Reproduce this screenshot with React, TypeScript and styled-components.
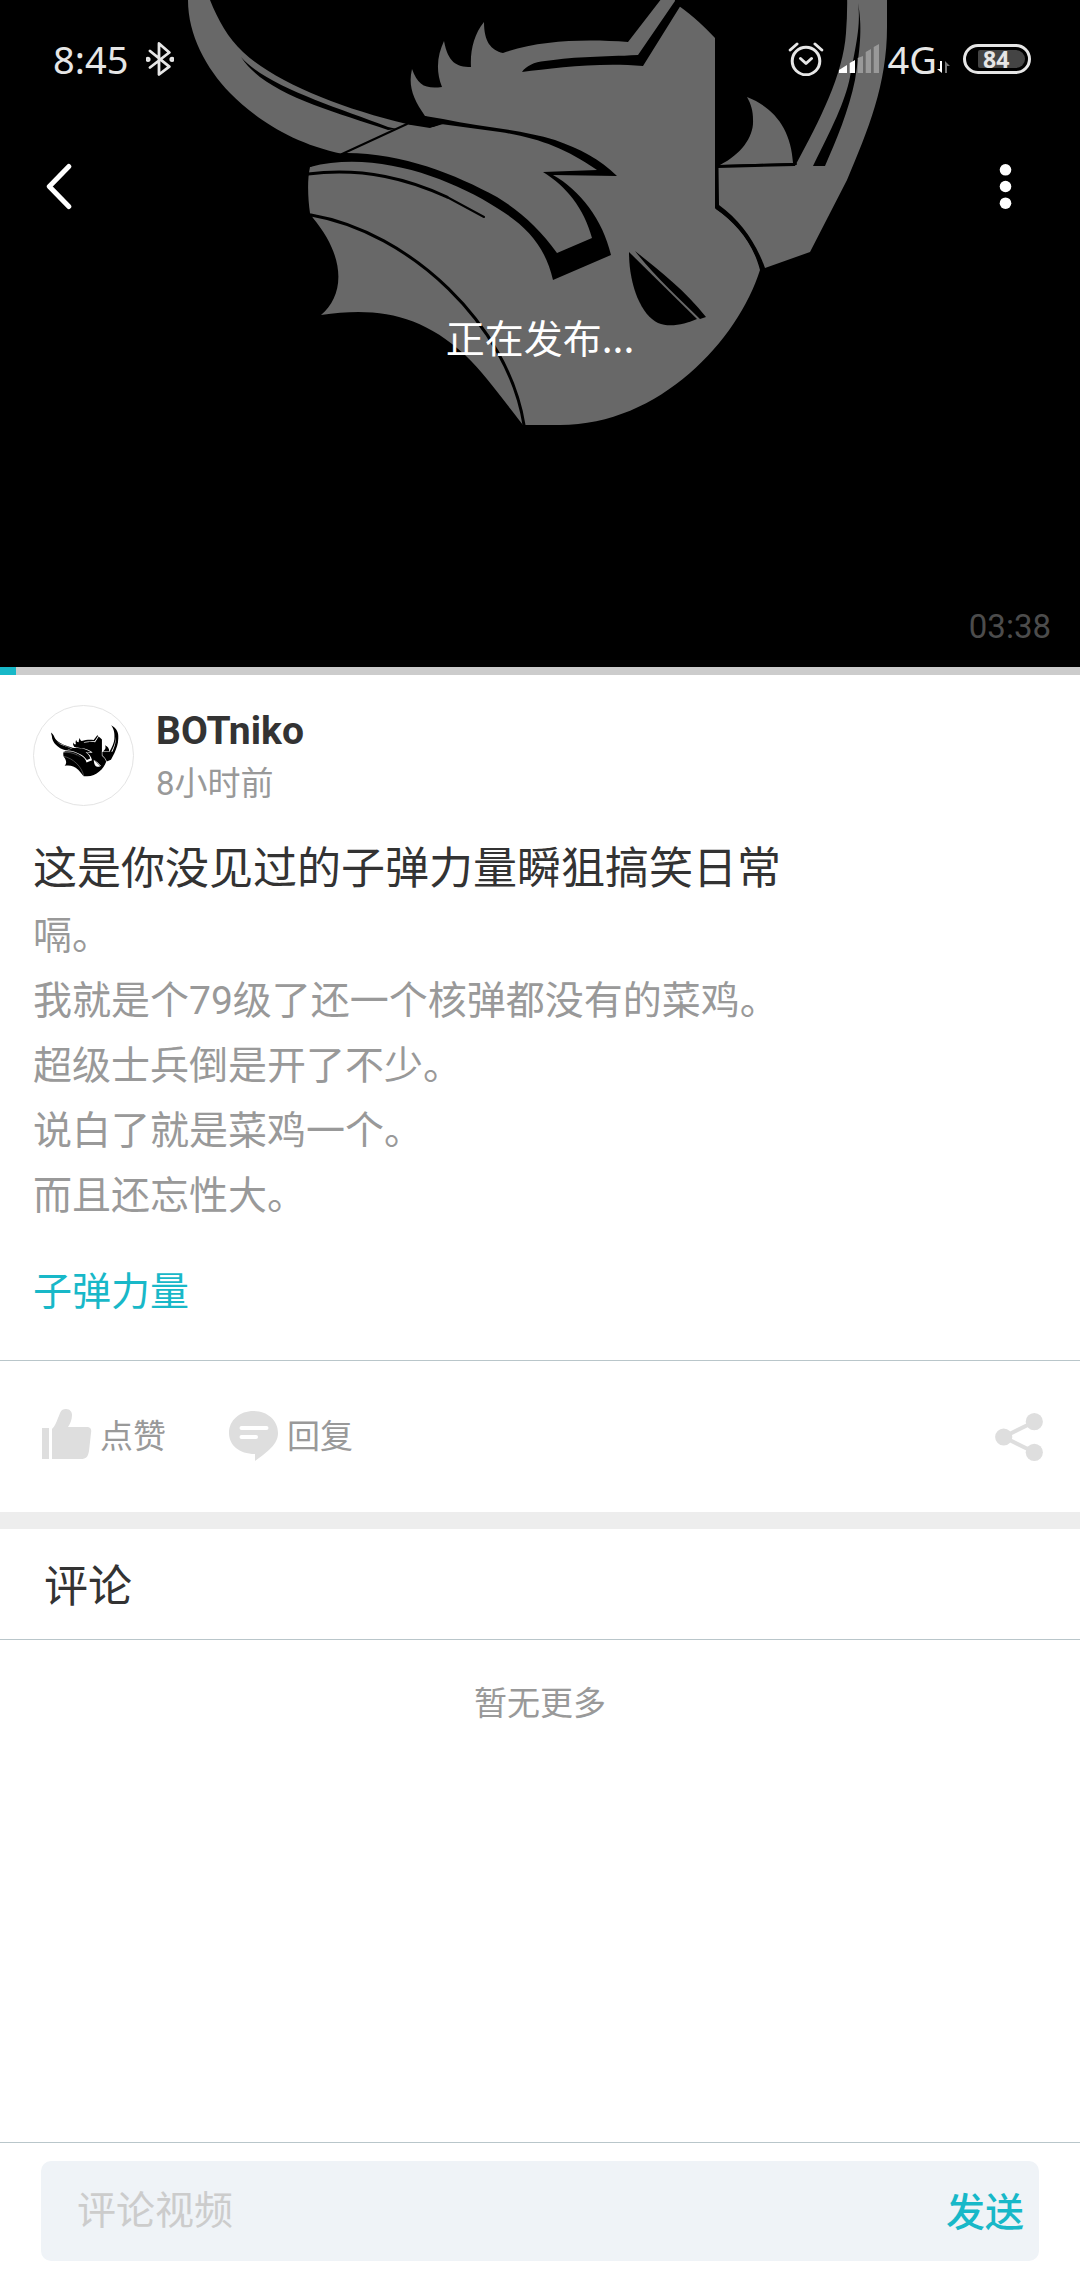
import { useState } from "react";
import styled, { createGlobalStyle } from "styled-components";

const GlobalStyle = createGlobalStyle`
  * {
    box-sizing: border-box;
  }

  body {
    margin: 0;
    background: #fff;
    font-family: Roboto, "Noto Sans CJK SC", sans-serif;
    color: #333;
  }

  h1, h2, p {
    margin: 0;
    font-weight: 400;
  }

  button, input {
    border: none;
    padding: 0;
    background: none;
    font-family: inherit;
  }
`;

const Page = styled.div`
  display: flex;
  flex-direction: column;
  min-height: 100vh;
`;

const Video = styled.section`
  position: relative;
  display: flex;
  flex-direction: column;
  min-height: 667px;
  background: #000;
  color: #fff;
  overflow: hidden;
`;

const Poster = styled.svg`
  position: absolute;
  inset: 0;
  width: 100%;
  height: 100%;
`;

const StatusBar = styled.div`
  position: relative;
  display: flex;
  justify-content: space-between;
  align-items: center;
  height: 118px;
  padding: 0 49px 0 53px;
  font-family: "Noto Sans", sans-serif;
  font-size: 38px;
  color: #e6e6e6;
`;

const StatusGroup = styled.div<{ $gap: number }>`
  display: flex;
  align-items: center;
  gap: ${({ $gap }) => $gap}px;
`;

const Network = styled.div`
  display: flex;
  align-items: flex-end;
  line-height: 32px;
`;

const Battery = styled.div`
  display: flex;
  align-items: center;
  width: 68px;
  height: 30px;
  margin-left: 4px;
  padding: 0 3px 0 12px;
  border: 3px solid #e6e6e6;
  border-radius: 15px;
`;

const BatteryLevel = styled.span`
  flex: 1;
  height: 18px;
  padding-left: 5px;
  border-radius: 2px 9px 9px 2px;
  background: #444;
  font-size: 23px;
  font-weight: 700;
  line-height: 18px;
`;

const Toolbar = styled.div`
  position: relative;
  display: flex;
  justify-content: space-between;
  align-items: center;
  height: 136px;
  padding: 0 39px;
`;

const IconButton = styled.button`
  display: flex;
  justify-content: center;
  align-items: center;
  height: 72px;
  cursor: pointer;
`;

const Publishing = styled.p`
  position: relative;
  padding-top: 57px;
  font-family: "Noto Sans CJK SC", sans-serif;
  font-size: 39px;
  line-height: 50px;
  text-align: center;
`;

const Duration = styled.time`
  position: relative;
  margin-top: auto;
  padding: 0 29px 20px;
  font-size: 33px;
  line-height: 40px;
  text-align: right;
  color: #4c4c4c;
`;

const Progress = styled.div`
  height: 8px;
  background: #ccc;
`;

const ProgressValue = styled.div`
  height: 100%;
  background: #18b8c8;
`;

const Info = styled.section`
  padding: 30px 33px 38px;
  border-bottom: 1px solid #b9c6ca;
`;

const Author = styled.div`
  display: flex;
  gap: 22px;
`;

const Avatar = styled.svg`
  width: 101px;
  height: 101px;
  border: 1px solid #e4e4e4;
  border-radius: 50%;
`;

const AuthorName = styled.p`
  padding-top: 1px;
  font-size: 39px;
  font-weight: 700;
  line-height: 50px;
`;

const PostedAt = styled.p`
  font-size: 33px;
  line-height: 56px;
  color: #999;
`;

const Title = styled.h1`
  margin-top: 27px;
  font-size: 44px;
  line-height: 60px;
`;

const Description = styled.p`
  margin-top: 5px;
  font-size: 39px;
  line-height: 65px;
  color: #999;
  white-space: pre-line;
`;

const Tag = styled.a`
  display: block;
  width: fit-content;
  margin-top: 33px;
  font-size: 39px;
  line-height: 60px;
  color: #18b8c8;
  text-decoration: none;
`;

const Actions = styled.div`
  display: flex;
  align-items: center;
  gap: 62px;
  height: 151px;
  padding: 0 36px 0 41px;
`;

const ActionButton = styled.button<{ $end?: boolean }>`
  display: flex;
  align-items: center;
  gap: 8px;
  margin-left: ${({ $end }) => ($end ? "auto" : "0")};
  font-size: 33px;
  line-height: 50px;
  color: #999;
  cursor: pointer;
`;

const Comments = styled.section`
  flex: 1;
  border-top: 17px solid #ededed;
`;

const CommentsTitle = styled.h2`
  padding: 28px 44px 22px;
  border-bottom: 1px solid #b9c6ca;
  font-size: 44px;
  line-height: 60px;
`;

const Empty = styled.p`
  padding-top: 39px;
  font-size: 33px;
  line-height: 50px;
  text-align: center;
  color: #999;
`;

const CommentForm = styled.form`
  padding: 18px 41px 19px;
  border-top: 1px solid #b9c6ca;
`;

const CommentBox = styled.div`
  display: flex;
  height: 100px;
  padding: 0 15px 0 36px;
  border-radius: 10px;
  background: #eff3f7;
`;

const CommentInput = styled.input`
  flex: 1;
  min-width: 0;
  outline: none;
  font-size: 39px;
  color: #333;

  &::placeholder {
    color: #ccc;
    opacity: 1;
  }
`;

const SendButton = styled.button`
  padding-bottom: 5px;
  font-size: 39px;
  font-weight: 500;
  color: #18b8c8;
  cursor: pointer;
`;

const Bull = ({ fill, line }: { fill: string; line: string }) => (
  <>
    <g fill={fill}>
      {/* left horn */}
      <path d="M179-36C190-28 203-12 210 0C218 20 228 38 243 52C275 82 340 108 407 124L343 154C290 143 255 118 230 93C206 68 188 35 188 0C185-12 180-24 179-36Z" />
      {/* right horn */}
      <path d="M812-112C860-90 887-45 887 0V27C887 85 868 130 847 180L810 252L765 268C756 243 741 221 719 205L718 168L795 166C820 120 843 75 846 33C850-20 845-70 812-112Z" />
      <path d="M747 97C775 108 791 130 793 163L720 165C742 154 754 136 753 120C753 111 751 104 747 97Z" />
      {/* head */}
      <path d="M343 154L407 124L433 127L443 124L425 116C413 99 408 86 412 69C418 86 426 89 442 87C435 69 438 54 444 41C448 62 456 67 471 67C470 51 474 34 484 22C484 42 491 50 503 53C540 40 585 39 628 42L662-2L669-8L679 6C694 17 705 27 715 38V208C737 224 753 243 760 270C738 340 660 425 560 425H525L523 425C500 396 485 374 465 355C420 313 375 307 321 315C343 297 348 260 313 218L310 213C308 200 307 180 310 167Z" />
    </g>
    <g fill={line}>
      <path d="M241 57C266 86 333 106 388 127L397 129L388 130C330 110 265 94 241 57Z" />
      <path d="M858 3C862 25 861 45 855 80C849 110 836 141 825 166H813C832 128 845 102 850 77C856 45 861 25 858 3Z" />
      <path d="M675 1L638 55C600 57 580 56 545 61C534 62 526 66 522 72C552 68 600 62 643 66L681 5L678-10Z" />
      {/* brow */}
      <path d="M425 116L443 119C480 127 520 129 555 140C580 149 600 159 617 176L553 175C580 190 603 220 611 255L553 280C545 245 525 225 497 208C450 178 375 150 310 167L300 163L343 153C400 152 455 174 497 197C520 211 540 229 557 253L592 238C584 208 566 186 543 172L597 170C565 148 538 138 500 132L441 124L430 128L405 124Z" />
      {/* eye */}
      <path d="M629 252C629 285 641 315 658 323C670 328 685 324 697 319L629 252Z" />
      <path d="M635 251C655 267 685 290 706 317L700 319C680 299 655 277 635 251Z" />
    </g>
    <g fill="none" stroke={line} strokeLinecap="round">
      <path d="M342 154L407 124" strokeWidth="2" />
      <path d="M308 174C365 167 410 180 447 197" strokeWidth="3" />
      <path d="M447 197L484 217" strokeWidth="2" />
      <path d="M311 215C410 232 508 325 524 425" strokeWidth="3" />
      <path d="M717 166L717 208C738 222 754 243 762 268" strokeWidth="3" />
      <path d="M719 166L796 164" strokeWidth="2" />
    </g>
  </>
);

const BluetoothIcon = () => (
  <svg width="28" height="34" viewBox="0 0 28 34" fill="none" stroke="currentColor" strokeWidth="2.8" strokeLinejoin="round" strokeLinecap="round">
    <path d="M4 9L23.3 24.7L13 32.5V1.5L23.3 10.5L4 25.5" />
    <circle cx="2" cy="17.3" r="1.2" />
    <circle cx="26" cy="17.3" r="1.2" />
  </svg>
);

const AlarmIcon = () => (
  <svg width="36" height="34" viewBox="0 0 36 34" fill="none" stroke="currentColor" strokeWidth="3" strokeLinecap="round" strokeLinejoin="round">
    <circle cx="18" cy="19" r="13.8" />
    <path d="M12.5 16.5L18 21.5L23.5 16.5M2.2 8L9 2M27 2L33.8 8" />
  </svg>
);

const SignalIcon = () => (
  <svg width="40" height="34" viewBox="0 -2 40 34">
    <path d="M0 26L8 21V29H0ZM10.7 19L16 16V29H10.7Z" fill="#fff" />
    <path d="M18.7 14L24 12V29H18.7ZM26.7 8L32 5V29H26.7ZM34.7 3L40 0V29H34.7Z" fill="#999" />
  </svg>
);

const DataIcon = () => (
  <svg width="13" height="14" viewBox="0 0 13 14">
    <path d="M3 0H5V12L0 8H3Z" fill="#fff" />
    <path d="M8 12H10V5H13L8 0Z" fill="#777" />
  </svg>
);

const BackIcon = () => (
  <svg width="40" height="48" viewBox="0 0 40 48" fill="none" stroke="#fff" strokeWidth="5" strokeLinecap="round" strokeLinejoin="round">
    <path d="M29.8 4.5L10.3 24.5L29.8 44.5" />
  </svg>
);

const MoreIcon = () => (
  <svg width="72" height="48" viewBox="0 0 72 48" fill="#fff">
    <circle cx="36.5" cy="7.8" r="5.8" />
    <circle cx="36.5" cy="24.5" r="5.8" />
    <circle cx="36.5" cy="41.2" r="5.8" />
  </svg>
);

const LikeIcon = () => (
  <svg width="51" height="56" viewBox="0 0 51 56" fill="#dedede">
    <path d="M1 19H8V50H1ZM11 50V20C14 17 15 14 17 9C19 5 19 0 25 0C29 0 31 3 31 6C31 11 29 15 27 18H46C49 18 51 20 50 24L48 42C47 48 45 50 40 50Z" />
  </svg>
);

const ReplyIcon = () => (
  <svg width="51" height="52" viewBox="0 0 51 52">
    <path d="M25.5 0C39 0 50 9 50 22C50 31 44 38 27 50V43C11 43 1 34 1 22C1 9 12 0 25.5 0Z" fill="#dedede" />
    <path d="M13.5 17H38.5M13.5 26H28" stroke="#fff" strokeWidth="4" strokeLinecap="round" />
  </svg>
);

const ShareIcon = () => (
  <svg width="49" height="50" viewBox="0 0 49 50" fill="#dedede">
    <path d="M39.3 9.7L8.7 25L39.3 40.3" fill="none" stroke="#dedede" strokeWidth="4" />
    <circle cx="8.7" cy="25" r="8.6" />
    <circle cx="39.3" cy="9.7" r="8.6" />
    <circle cx="39.3" cy="40.3" r="8.6" />
  </svg>
);

const video = {
  author: "BOTniko",
  postedAt: "8小时前",
  title: "这是你没见过的子弹力量瞬狙搞笑日常",
  description: `嗝。
我就是个79级了还一个核弹都没有的菜鸡。
超级士兵倒是开了不少。
说白了就是菜鸡一个。
而且还忘性大。`,
  tag: "子弹力量",
  duration: "03:38",
  progress: 1.5,
};

const App = () => {
  const [comment, setComment] = useState("");

  return (
    <Page>
      <GlobalStyle />
      <Video>
        <Poster viewBox="0 0 1080 667" preserveAspectRatio="xMidYMin slice" aria-hidden="true">
          <Bull fill="#686868" line="#000" />
        </Poster>
        <StatusBar>
          <StatusGroup $gap={18}>
            <span>8:45</span>
            <BluetoothIcon />
          </StatusGroup>
          <StatusGroup $gap={9}>
            <StatusGroup $gap={15}>
              <AlarmIcon />
              <SignalIcon />
            </StatusGroup>
            <Network>
              4G
              <DataIcon />
            </Network>
            <Battery>
              <BatteryLevel>84</BatteryLevel>
            </Battery>
          </StatusGroup>
        </StatusBar>
        <Toolbar>
          <IconButton aria-label="返回">
            <BackIcon />
          </IconButton>
          <IconButton aria-label="更多">
            <MoreIcon />
          </IconButton>
        </Toolbar>
        <Publishing>正在发布...</Publishing>
        <Duration>{video.duration}</Duration>
      </Video>
      <Progress>
        <ProgressValue style={{ width: `${video.progress}%` }} />
      </Progress>

      <Info>
        <Author>
          <Avatar viewBox="0 -315 1042 1042" aria-hidden="true">
            <Bull fill="#000" line="#fff" />
          </Avatar>
          <div>
            <AuthorName>{video.author}</AuthorName>
            <PostedAt>{video.postedAt}</PostedAt>
          </div>
        </Author>
        <Title>{video.title}</Title>
        <Description>{video.description}</Description>
        <Tag href="#tag">{video.tag}</Tag>
      </Info>

      <Actions>
        <ActionButton>
          <LikeIcon />
          点赞
        </ActionButton>
        <ActionButton>
          <ReplyIcon />
          回复
        </ActionButton>
        <ActionButton $end aria-label="分享">
          <ShareIcon />
        </ActionButton>
      </Actions>

      <Comments>
        <CommentsTitle>评论</CommentsTitle>
        <Empty>暂无更多</Empty>
      </Comments>

      <CommentForm onSubmit={(e) => e.preventDefault()}>
        <CommentBox>
          <CommentInput
            aria-label="评论视频"
            placeholder="评论视频"
            value={comment}
            onChange={(e) => setComment(e.target.value)}
          />
          <SendButton type="submit">发送</SendButton>
        </CommentBox>
      </CommentForm>
    </Page>
  );
};

export default App;
